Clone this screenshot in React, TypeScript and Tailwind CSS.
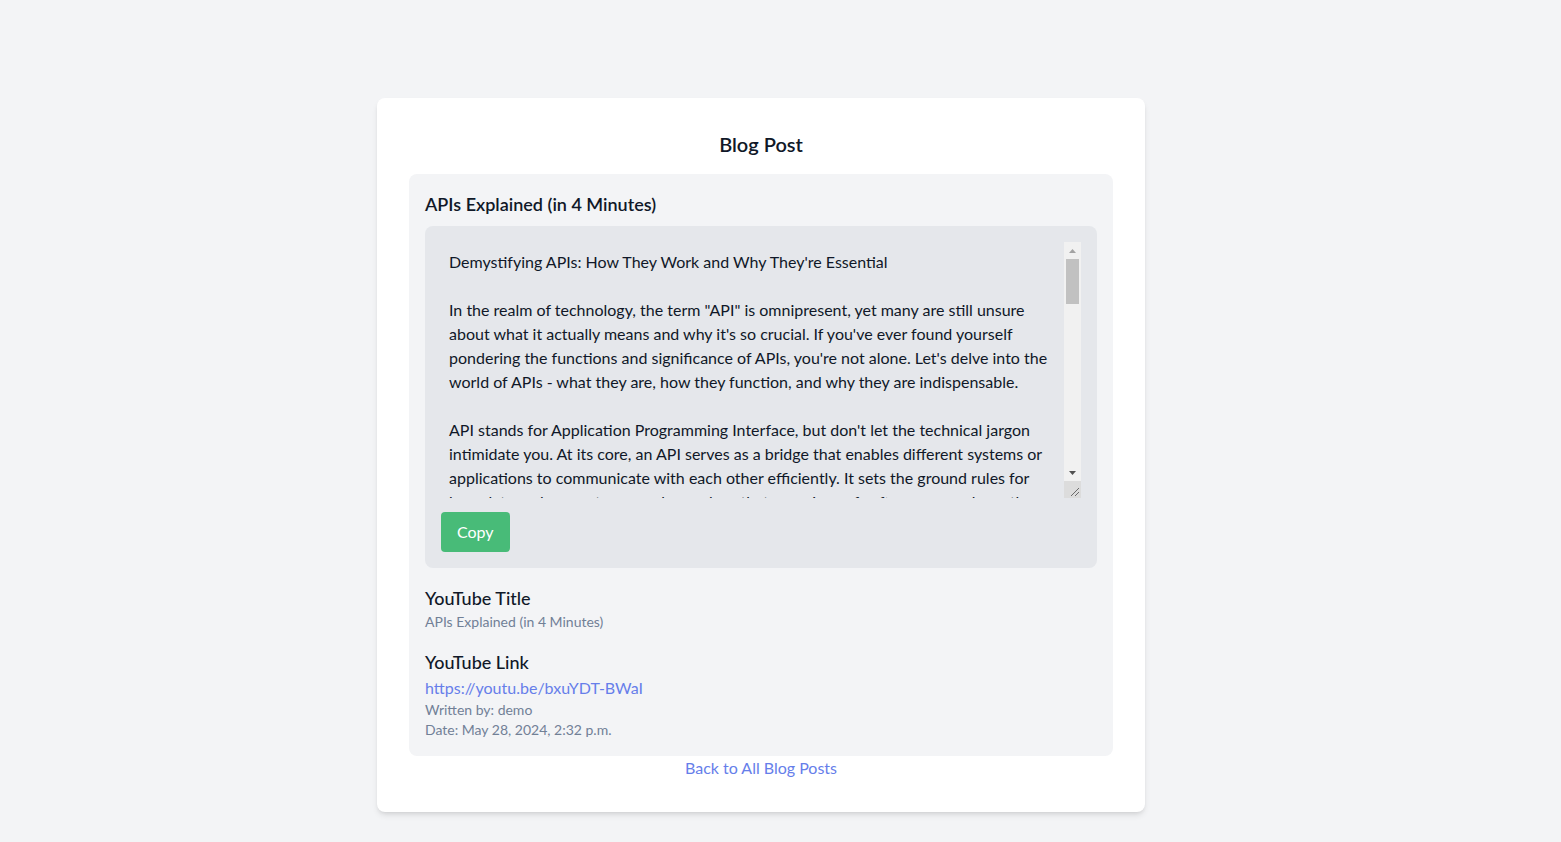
import { useState } from 'react';

const postText = `Demystifying APIs: How They Work and Why They're Essential

In the realm of technology, the term "API" is omnipresent, yet many are still unsure
about what it actually means and why it's so crucial. If you've ever found yourself
pondering the functions and significance of APIs, you're not alone. Let's delve into the
world of APIs - what they are, how they function, and why they are indispensable.

API stands for Application Programming Interface, but don't let the technical jargon
intimidate you. At its core, an API serves as a bridge that enables different systems or
applications to communicate with each other efficiently. It sets the ground rules for
how data and requests are exchanged, so that one piece of software can ask another
for information or services without needing to know how it works on the inside.

Think of an API like a waiter in a restaurant. You, the customer, look at the menu and
tell the waiter what you want. The waiter takes your order to the kitchen, and then
brings the food back to your table. You never need to step into the kitchen yourself.`;

function FakeScrollbar() {
  return (
    <div className="flex w-[17px] shrink-0 flex-col">
      <div className="flex flex-1 flex-col bg-[#f1f1f1]">
        <div className="flex h-[17px] items-center justify-center">
          <svg width="7" height="4" viewBox="0 0 7 4">
            <path d="M0 4 L3.5 0 L7 4 Z" fill="#a3a3a3" />
          </svg>
        </div>
        <div className="mx-[2px] h-[45px] bg-[#c1c1c1]" />
        <div className="flex-1" />
        <div className="flex h-[17px] items-center justify-center">
          <svg width="7" height="4" viewBox="0 0 7 4">
            <path d="M0 0 L3.5 4 L7 0 Z" fill="#505050" />
          </svg>
        </div>
      </div>
      <div className="flex h-[17px] items-end justify-end bg-[#dcdcdc] p-[2px]">
        <svg width="9" height="9" viewBox="0 0 9 9">
          <path d="M1 9 L9 1 M5 9 L9 5" stroke="#6b6b6b" strokeWidth="1" />
        </svg>
      </div>
    </div>
  );
}

export default function App() {
  const [copied, setCopied] = useState(false);

  return (
    <div className="min-h-screen bg-gray-100 pt-[98px] pb-8 font-['Lato',sans-serif] text-gray-900">
      <div className="flex justify-center pr-[39px]">
        <div className="w-[768px] rounded-lg bg-white p-8 shadow-md">
          <h1 className="mb-4 text-center text-xl font-semibold">Blog Post</h1>

          <div className="rounded-lg bg-gray-100 p-4">
            <h2 className="mb-2 text-lg font-semibold">APIs Explained (in 4 Minutes)</h2>

            <div className="rounded-lg bg-gray-200 p-4">
              <div className="flex h-64">
                <textarea
                  readOnly
                  value={postText}
                  className="block h-full flex-1 resize-none overflow-hidden bg-gray-200 px-2 py-2 text-base leading-6 text-gray-900 outline-none"
                />
                <FakeScrollbar />
              </div>
              <button
                onClick={() => setCopied(true)}
                className="mt-3.5 rounded bg-[#48bb78] px-4 py-2 text-base text-white hover:bg-[#38a169]"
              >
                {copied ? 'Copied' : 'Copy'}
              </button>
            </div>

            <div className="mt-4">
              <h3 className="text-lg font-medium">YouTube Title</h3>
              <p className="text-sm text-[#718096]">APIs Explained (in 4 Minutes)</p>
            </div>

            <div className="mt-4">
              <h3 className="text-lg font-medium">YouTube Link</h3>
              <a href="#" className="block text-base text-[#667eea] hover:underline">
                https://youtu.be/bxuYDT-BWaI
              </a>
              <p className="text-sm text-[#718096]">Written by: demo</p>
              <p className="text-sm text-[#718096]">Date: May 28, 2024, 2:32 p.m.</p>
            </div>
          </div>

          <div className="text-center">
            <a href="#" className="text-base text-[#667eea] hover:underline">
              Back to All Blog Posts
            </a>
          </div>
        </div>
      </div>
    </div>
  );
}
